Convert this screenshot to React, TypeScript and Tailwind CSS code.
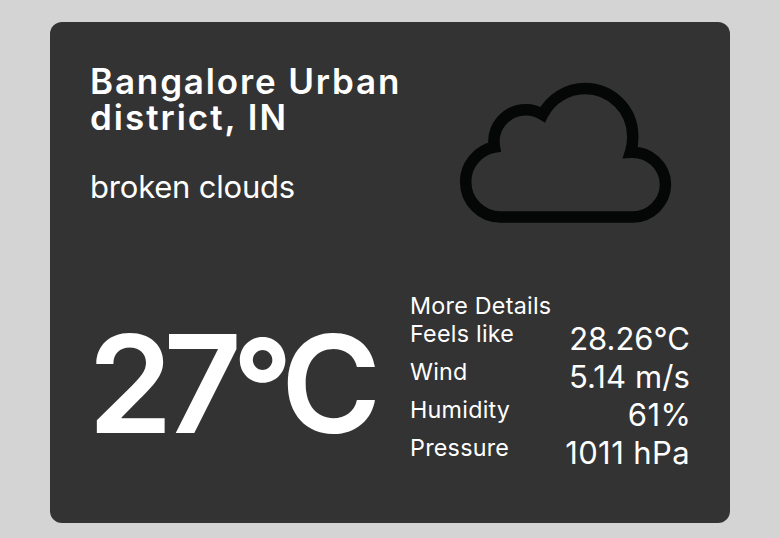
const details = [
  { label: "Feels like", value: "28.26°C", spacing: "tracking-normal" },
  { label: "Wind", value: "5.14 m/s", spacing: "tracking-[0.1px]" },
  { label: "Humidity", value: "61%", spacing: "tracking-[0.5px] -mr-[1.5px]" },
  { label: "Pressure", value: "1011 hPa", spacing: "tracking-[0.4px]" },
];

function CloudIcon() {
  return (
    <svg width="240" height="200" viewBox="450 62 240 200" fill="none" className="block">
      <path
        d="M501 217A35 35 0 0 1 465.700 182A35 35 0 0 1 494.500 147.200A31.800 31.800 0 0 1 526 109.700A32 32 0 0 1 542.700 114.500A47.700 47.700 0 0 1 585 88.500A47.700 47.700 0 0 1 632.700 136A47.700 47.700 0 0 1 630.500 152.200A33 33 0 0 1 665.500 184.500A33 33 0 0 1 633 217Z"
        stroke="#050706"
        strokeWidth="11.500"
      />
    </svg>
  );
}

export default function App() {
  return (
    <div className="h-[538px] w-[780px] overflow-hidden bg-[#d4d4d4] px-[50px] pt-[22px] font-['Inter',sans-serif] text-white">
      <main className="h-[501px] w-[680px] rounded-[12px] bg-[#333333] px-10">
        <header className="flex h-[260px] justify-between">
          <div className="w-[330px] pt-[41px]">
            <h1 className="text-[35px] leading-[36px] font-semibold tracking-[1.85px]">
              Bangalore Urban<br />
              <span className="tracking-[1.98px]">district, IN</span>
            </h1>
            <p className="mt-[34px] text-[31px] leading-[36px] tracking-[-0.2px]">broken clouds</p>
          </div>
          <div className="pt-[40px]"><CloudIcon /></div>
        </header>
        <section className="flex">
          <div className="-ml-[2px] w-[322px] pt-[18px] text-[136px] leading-[168px] font-semibold tracking-[-9.3px] whitespace-nowrap">
            27<span className="text-[131px] leading-none font-bold tracking-[-11.8px]">°</span>C
          </div>
          <div className="w-[280px] pt-[10px]">
            <h2 className="text-[23.3px] leading-[28px] tracking-[0.25px]">More Details</h2>
            {details.map((d) => (
              <div key={d.label} className="flex h-[38px] justify-between whitespace-nowrap">
                <span className="text-[23.3px] leading-[28px] tracking-[0.25px]">{d.label}</span>
                <span className={`text-[31px] leading-[38px] ${d.spacing}`}>{d.value}</span>
              </div>
            ))}
          </div>
        </section>
      </main>
    </div>
  );
}
